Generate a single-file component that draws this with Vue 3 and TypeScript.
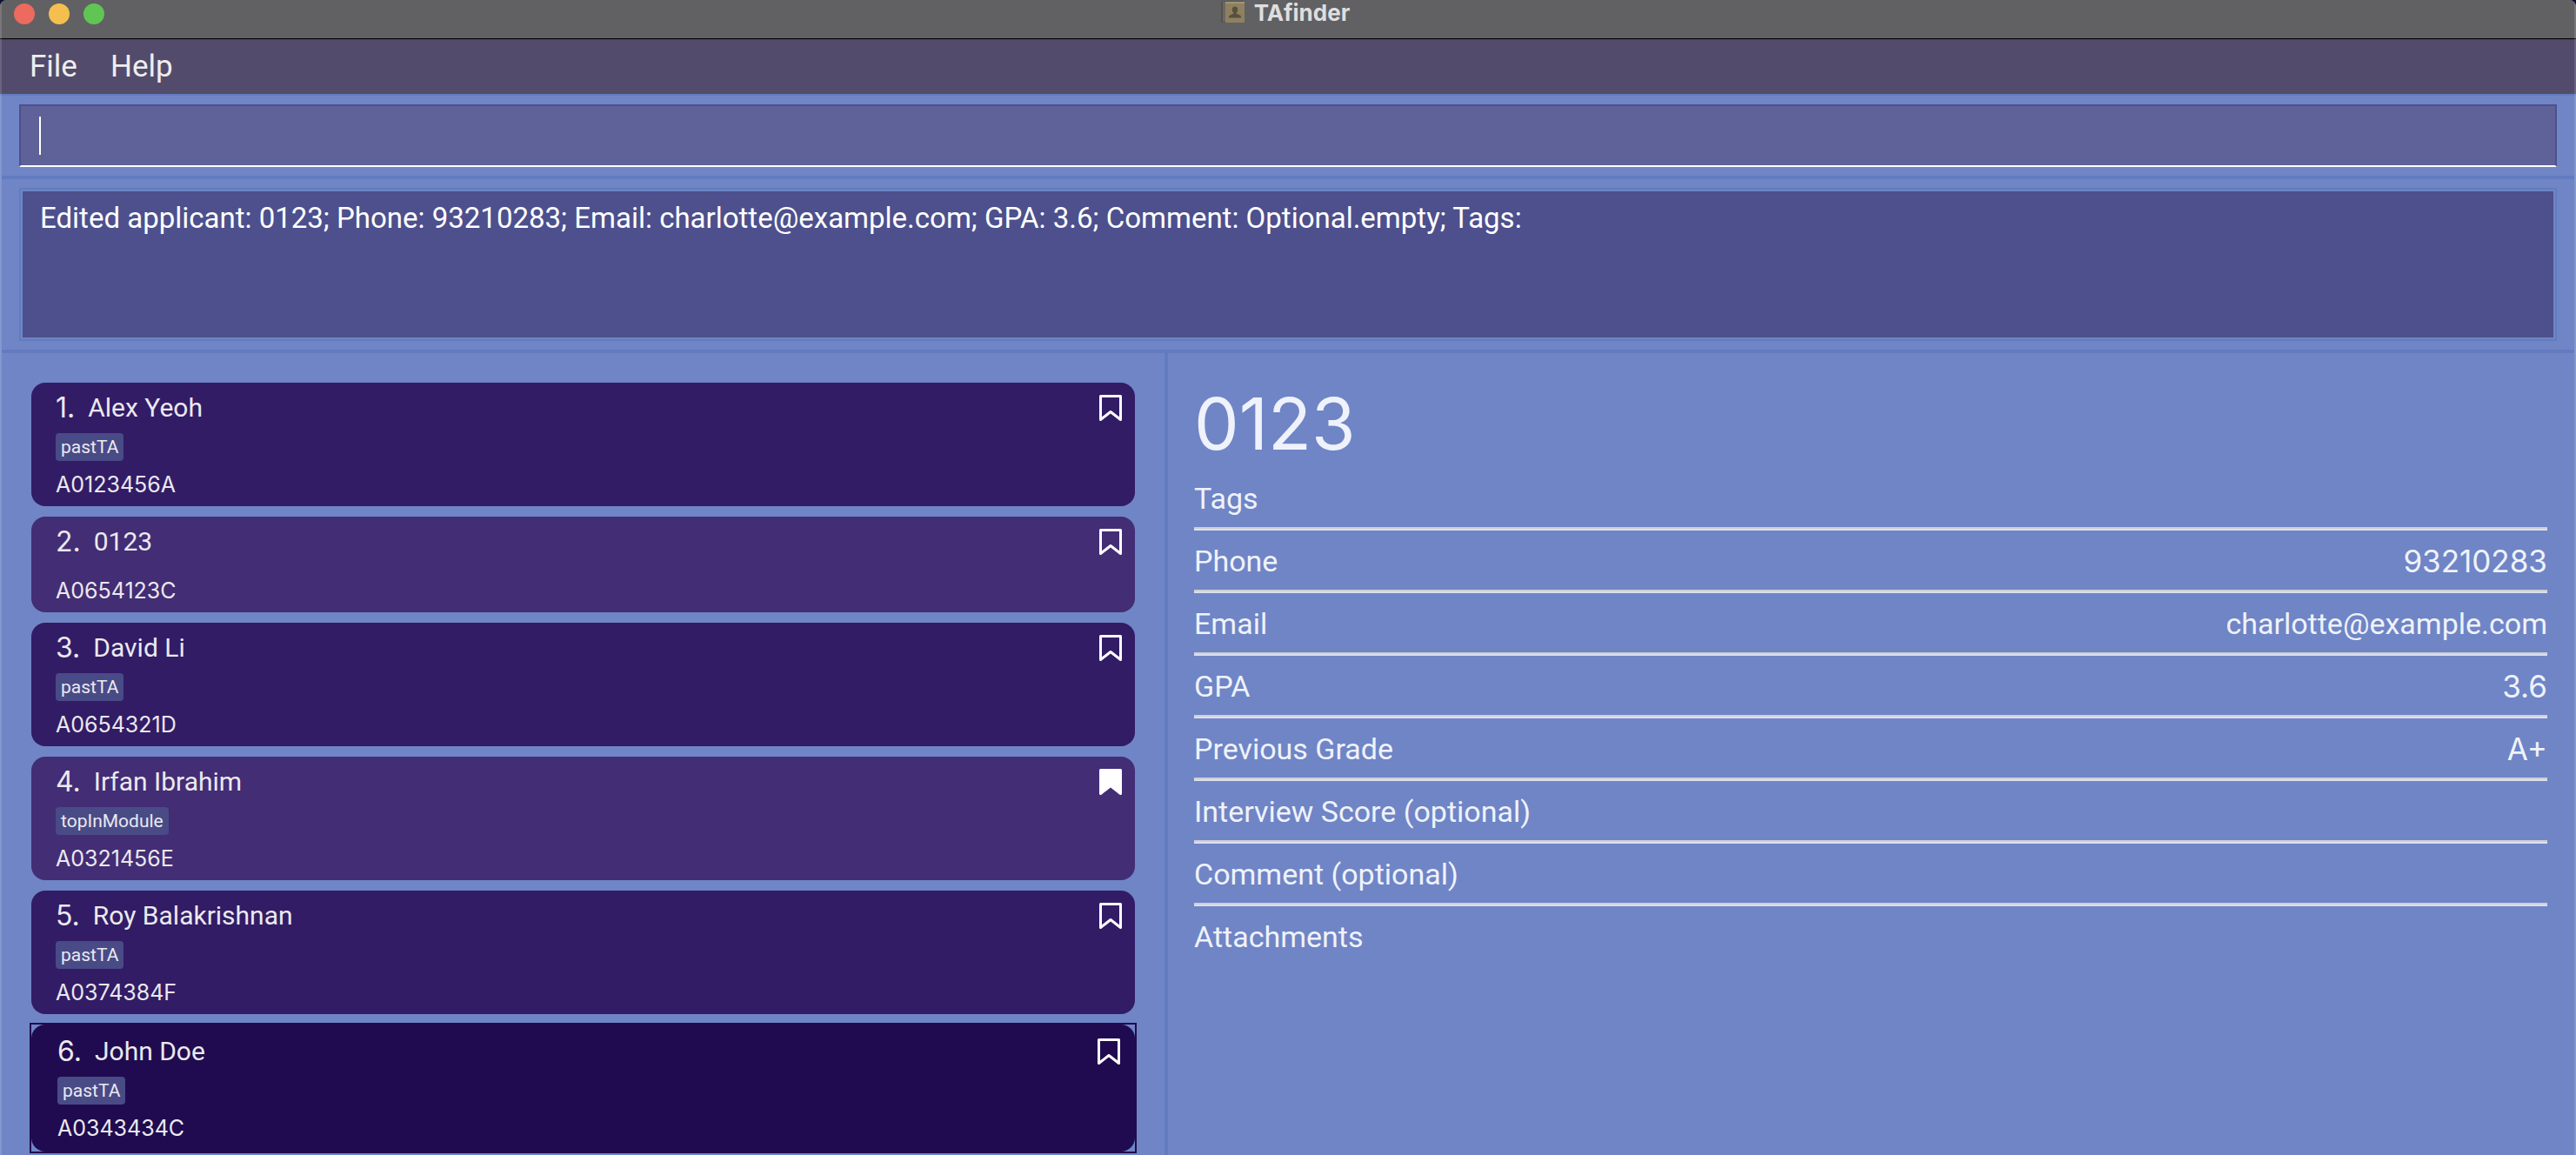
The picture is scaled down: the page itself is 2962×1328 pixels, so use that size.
<script setup lang="ts">
import { ref } from 'vue'

interface Applicant {
  id: number
  name: string
  tags: string[]
  studentNo: string
  bookmarked: boolean
}

interface Detail {
  label: string
  value: string
  figure?: boolean
}

const command = ref('')
const selectedId = ref(6)
const result = ref(
  'Edited applicant: 0123; Phone: 93210283; Email: charlotte@example.com; GPA: 3.6; Comment: Optional.empty; Tags:',
)

const applicants = ref<Applicant[]>([
  { id: 1, name: 'Alex Yeoh', tags: ['pastTA'], studentNo: 'A0123456A', bookmarked: false },
  { id: 2, name: '0123', tags: [], studentNo: 'A0654123C', bookmarked: false },
  { id: 3, name: 'David Li', tags: ['pastTA'], studentNo: 'A0654321D', bookmarked: false },
  { id: 4, name: 'Irfan Ibrahim', tags: ['topInModule'], studentNo: 'A0321456E', bookmarked: true },
  { id: 5, name: 'Roy Balakrishnan', tags: ['pastTA'], studentNo: 'A0374384F', bookmarked: false },
  { id: 6, name: 'John Doe', tags: ['pastTA'], studentNo: 'A0343434C', bookmarked: false },
])

const details: Detail[] = [
  { label: 'Tags', value: '' },
  { label: 'Phone', value: '93210283', figure: true },
  { label: 'Email', value: 'charlotte@example.com' },
  { label: 'GPA', value: '3.6', figure: true },
  { label: 'Previous Grade', value: 'A+', figure: true },
  { label: 'Interview Score (optional)', value: '' },
  { label: 'Comment (optional)', value: '' },
  { label: 'Attachments', value: '' },
]
</script>

<template>
  <div class="window">
    <header class="titlebar">
      <div class="lights">
        <button class="light close" type="button" aria-label="Close"></button>
        <button class="light minimise" type="button" aria-label="Minimise"></button>
        <button class="light zoom" type="button" aria-label="Zoom"></button>
      </div>
      <div class="title">
        <svg class="book" viewBox="0 0 28 28" aria-hidden="true">
          <rect x="0" y="1" width="27" height="25" rx="2" fill="#56534f" />
          <rect x="2" y="2" width="3" height="23" fill="#6b6864" />
          <rect x="5" y="2" width="22" height="24" rx="1" fill="#8f8060" />
          <rect x="5" y="2" width="22" height="2" fill="#a39473" />
          <path
            d="M16 7.500c2.200 0 3.200 1.400 3.200 3.400 0 1.600-.7 2.900-1.500 3.700v1.200c1.700.8 5.300 1.400 5.300 3.500V20.500H9v-1.200c0-2.100 3.600-2.700 5.300-3.500v-1.200c-.8-.8-1.500-2.100-1.500-3.700 0-2 1-3.400 3.200-3.400z"
            fill="#57503f"
          />
        </svg>
        <span>TAfinder</span>
      </div>
    </header>

    <nav class="menubar">
      <button class="menu" type="button">File</button>
      <button class="menu" type="button">Help</button>
    </nav>

    <div class="content">
      <section class="command">
        <input v-model="command" class="command-box" type="text" aria-label="Command" />
        <span class="caret"></span>
      </section>

      <section class="result">
        <div class="result-frame">
          <textarea class="result-text" aria-label="Result" readonly :value="result"></textarea>
        </div>
      </section>

      <main class="split">
        <ul class="list">
          <li
            v-for="a in applicants"
            :key="a.id"
            class="cell"
            :class="{ selected: a.id === selectedId }"
            @click="selectedId = a.id"
          >
            <article class="card">
              <h2 class="name">
                <span class="index">{{ a.id }}.</span>
                <span>{{ a.name }}</span>
              </h2>
              <div class="tags">
                <span v-for="t in a.tags" :key="t" class="tag">{{ t }}</span>
              </div>
              <p class="student">{{ a.studentNo }}</p>
              <button
                class="bookmark"
                type="button"
                aria-label="Bookmark"
                @click.stop="a.bookmarked = !a.bookmarked"
              >
                <svg viewBox="0 0 26 30" aria-hidden="true">
                  <path
                    d="M1.500 1.500H24.500V28.500L13 19.500L1.500 28.500Z"
                    :fill="a.bookmarked ? '#fff' : 'none'"
                    stroke="#fff"
                    stroke-width="3"
                    stroke-linejoin="round"
                  />
                </svg>
              </button>
            </article>
          </li>
        </ul>

        <section class="details">
          <h1 class="heading">0123</h1>
          <dl class="rows">
            <div v-for="d in details" :key="d.label" class="row">
              <dt>{{ d.label }}</dt>
              <dd :class="{ figure: d.figure }">{{ d.value }}</dd>
            </div>
          </dl>
        </section>
      </main>
    </div>
  </div>
</template>

<style>
html,
body,
#app {
  height: 100%;
}

body {
  margin: 0;
  background: #0e1230;
  overflow: hidden;
}
</style>

<style scoped>
.window {
  position: relative;
  display: flex;
  flex-direction: column;
  min-height: 100%;
  box-sizing: border-box;
  overflow: hidden;
  border-radius: 8px 8px 0 0;
  background: #6f85c6;
  font-family: Roboto, "Liberation Sans", sans-serif;
  color: #eff2fa;
}

/* light rim along both window sides */
.window::after {
  content: "";
  position: absolute;
  inset: 0;
  border: solid rgba(255, 255, 255, 0.14);
  border-width: 0 2px;
  pointer-events: none;
}

button {
  padding: 0;
  border: 0;
  background: none;
  font: inherit;
  color: inherit;
}

h1,
h2,
p,
ul,
dl,
dd {
  margin: 0;
  padding: 0;
  font-weight: 400;
}

.title,
.index,
.student,
.heading,
.figure {
  font-family: Inter, "Liberation Sans", sans-serif;
}

.titlebar {
  display: grid;
  grid-template-columns: 1fr auto 1fr;
  align-items: start;
  height: 44px;
  border-bottom: 1px solid #000;
  background: #616163;
}

.lights {
  display: flex;
  gap: 16px;
  padding: 4px 16px;
}

.light {
  width: 24px;
  height: 24px;
  border-radius: 50%;
}

.close {
  background: #ed6a5e;
}

.minimise {
  background: #f4bf4f;
}

.zoom {
  background: #61c554;
}

.title {
  display: flex;
  align-items: start;
  gap: 10px;
  padding-right: 6px;
  font-size: 26px;
  line-height: 30px;
  font-weight: 700;
  color: #dededf;
}

.book {
  width: 28px;
  height: 28px;
}

.menubar {
  display: flex;
  gap: 38px;
  padding: 0 34px;
  border-top: 1px solid #48435c;
  background: #534b6b;
}

.menu {
  font-size: 35px;
  line-height: 62px;
  color: #eeeeef;
}

.content {
  display: flex;
  flex: 1;
  flex-direction: column;
  padding: 0 2px;
  border-top: 2px solid #637bbf;
}

.command {
  position: relative;
  display: flex;
  padding: 10px 20px;
  border-bottom: 4px solid #637bbf;
}

.command-box {
  flex: 1;
  height: 72px;
  box-sizing: border-box;
  padding: 0 20px;
  border: 2px solid #4e508d;
  border-bottom-color: #fff;
  border-radius: 0;
  outline: none;
  background: #5e6299;
  font: inherit;
  font-size: 33px;
  color: #fff;
  caret-color: transparent;
}

.caret {
  position: absolute;
  top: 24px;
  left: 43px;
  width: 2px;
  height: 44px;
  background: #fff;
}

.result {
  padding: 10px 20px;
  border-bottom: 4px solid #637bbf;
}

.result-frame {
  display: flex;
  padding: 2px;
  border: 2px solid #637bbf;
}

.result-text {
  flex: 1;
  height: 168px;
  box-sizing: border-box;
  padding: 13px 20px;
  border: 0;
  outline: none;
  resize: none;
  background: #4d508d;
  font: inherit;
  font-size: 33px;
  line-height: 36px;
  color: #fff;
}

.split {
  display: grid;
  grid-template-columns: 1337fr 4px 1617fr;
  flex: 1;
}

.split::before {
  content: "";
  grid-area: 1 / 2;
  background: #637bbf;
}

.list {
  grid-area: 1 / 1;
  display: flex;
  flex-direction: column;
  gap: 12px;
  min-width: 0;
  padding: 34px 34px 0;
  list-style: none;
}

.card {
  position: relative;
  display: flex;
  flex-direction: column;
  gap: 10px;
  padding: 10px 28px 8px;
  border-radius: 16px;
  background: #321c66;
}

.cell:nth-child(even) .card {
  background: #432d75;
}

.cell.selected {
  outline: 2px solid #200b50;
}

.cell.selected .card {
  padding: 12px 30px 10px;
  background: #200b50;
}

.name {
  display: flex;
  gap: 15px;
  font-size: 30px;
  line-height: 38px;
  color: #ebe9ef;
}

.index {
  font-size: 32px;
}

.tags {
  display: flex;
  gap: 6px;
}

.tag {
  padding: 0 6px;
  border-radius: 4px;
  background: #494b86;
  font-size: 21px;
  line-height: 32px;
  color: #e9e9f0;
}

.student {
  font-size: 25px;
  line-height: 34px;
  color: #ebe9ef;
}

.bookmark {
  position: absolute;
  top: 14px;
  right: 15px;
  width: 26px;
  height: 30px;
}

.selected .bookmark {
  top: 16px;
  right: 17px;
}

.bookmark svg {
  display: block;
}

.details {
  grid-area: 1 / 3;
  min-width: 0;
  padding: 32px 31px 0 30px;
}

.heading {
  font-size: 82px;
  line-height: 100px;
}

.row {
  display: flex;
  justify-content: space-between;
  padding-top: 2px;
  font-size: 34px;
  line-height: 66px;
}

.row:not(:last-child) {
  border-bottom: 2px solid #dadff1;
  box-shadow: inset 0 -2px #cfcfd3;
  padding-bottom: 2px;
}

.figure {
  font-size: 35px;
}
</style>
